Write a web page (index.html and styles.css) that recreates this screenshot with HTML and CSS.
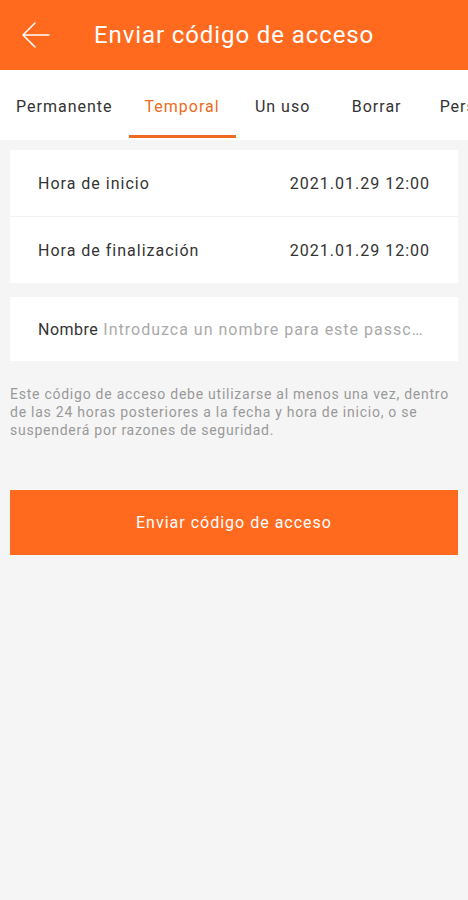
FILE: index.html
```html
<!DOCTYPE html>
<html lang="es">
<head>
    <meta charset="UTF-8">
    <meta name="viewport" content="width=device-width, initial-scale=1.0">
    <title>Enviar código de acceso</title>
    <link rel="stylesheet" href="styles.css">
</head>
<body>

    <!-- Header -->
    <div class="header">
        <svg class="back" width="30" height="30" viewBox="0 0 30 30">
            <path d="M28 15 H2 M14 3 L2 15 L14 27" fill="none" stroke="#fff" stroke-width="1.5" stroke-linecap="round" stroke-linejoin="round"/>
        </svg>
        <h1>Enviar código de acceso</h1>
    </div>

    <!-- Tabs -->
    <div class="tabs">
        <span class="tab">Permanente</span>
        <span class="tab active">Temporal</span>
        <span class="tab">Un uso</span>
        <span class="tab">Borrar</span>
        <span class="tab">Personalizado</span>
    </div>

    <!-- Times -->
    <div class="card">
        <div class="row">
            <span>Hora de inicio</span>
            <span>2021.01.29 12:00</span>
        </div>
        <div class="row">
            <span>Hora de finalización</span>
            <span>2021.01.29 12:00</span>
        </div>
    </div>

    <!-- Name -->
    <div class="card">
        <div class="row name-row">
            <span class="name-label">Nombre</span>
            <span class="placeholder">Introduzca un nombre para este passcode</span>
        </div>
    </div>

    <p class="note">Este código de acceso debe utilizarse al menos una vez, dentro de las 24 horas posteriores a la fecha y hora de inicio, o se suspenderá por razones de seguridad.</p>

    <button class="send-btn">Enviar código de acceso</button>

</body>
</html>
```

FILE: styles.css
```css
body {
    font-family: Roboto, "Noto Sans", sans-serif;
    background-color: #f5f5f5;
    margin: 0;
    padding: 0;
    color: #333;
}

.header {
    height: 70px;
    background-color: #ff6a1f;
    display: flex;
    align-items: center;
    padding-left: 21px;
}

.back {
    display: block;
}

.header h1 {
    margin: 0 0 0 43px;
    font-size: 24px;
    font-weight: 400;
    color: #fff;
    letter-spacing: 0.9px;
}

.tabs {
    height: 70px;
    background: white;
    display: flex;
    white-space: nowrap;
    overflow: hidden;
}

.tab {
    position: relative;
    display: flex;
    align-items: center;
    justify-content: center;
    flex-shrink: 0;
    min-width: 62px;
    padding: 2px 16px 0;
    font-size: 16px;
    letter-spacing: 1px;
    color: #333;
}

.tab.active {
    color: #ee6a20;
}

.tab.active::after {
    content: "";
    position: absolute;
    left: 0;
    right: 0;
    bottom: 2px;
    height: 3px;
    background: #ee6a20;
}

.card {
    margin: 10px 10px 0;
    background: white;
}

.card + .card {
    margin-top: 14px;
}

.row {
    height: 66px;
    display: flex;
    align-items: center;
    justify-content: space-between;
    padding: 0 28px;
    font-size: 16px;
    letter-spacing: 1px;
    color: #333;
}

.row + .row {
    border-top: 1px solid #f0f0f0;
}

.name-row {
    justify-content: flex-start;
    height: 64px;
}

.name-label {
    flex-shrink: 0;
    margin-right: 5px;
    letter-spacing: 0.5px;
}

.placeholder {
    color: #aaa;
    overflow: hidden;
    text-overflow: ellipsis;
    white-space: nowrap;
}

.note {
    margin: 24px 10px 0;
    font-size: 14px;
    letter-spacing: 0.75px;
    line-height: 18px;
    color: #999;
}

.send-btn {
    display: block;
    width: calc(100% - 20px);
    margin: 51px 10px 0;
    height: 65px;
    border: none;
    background-color: #ff6a1f;
    color: white;
    font-family: Roboto, "Noto Sans", sans-serif;
    font-size: 16px;
    letter-spacing: 1px;
    cursor: pointer;
}
```
